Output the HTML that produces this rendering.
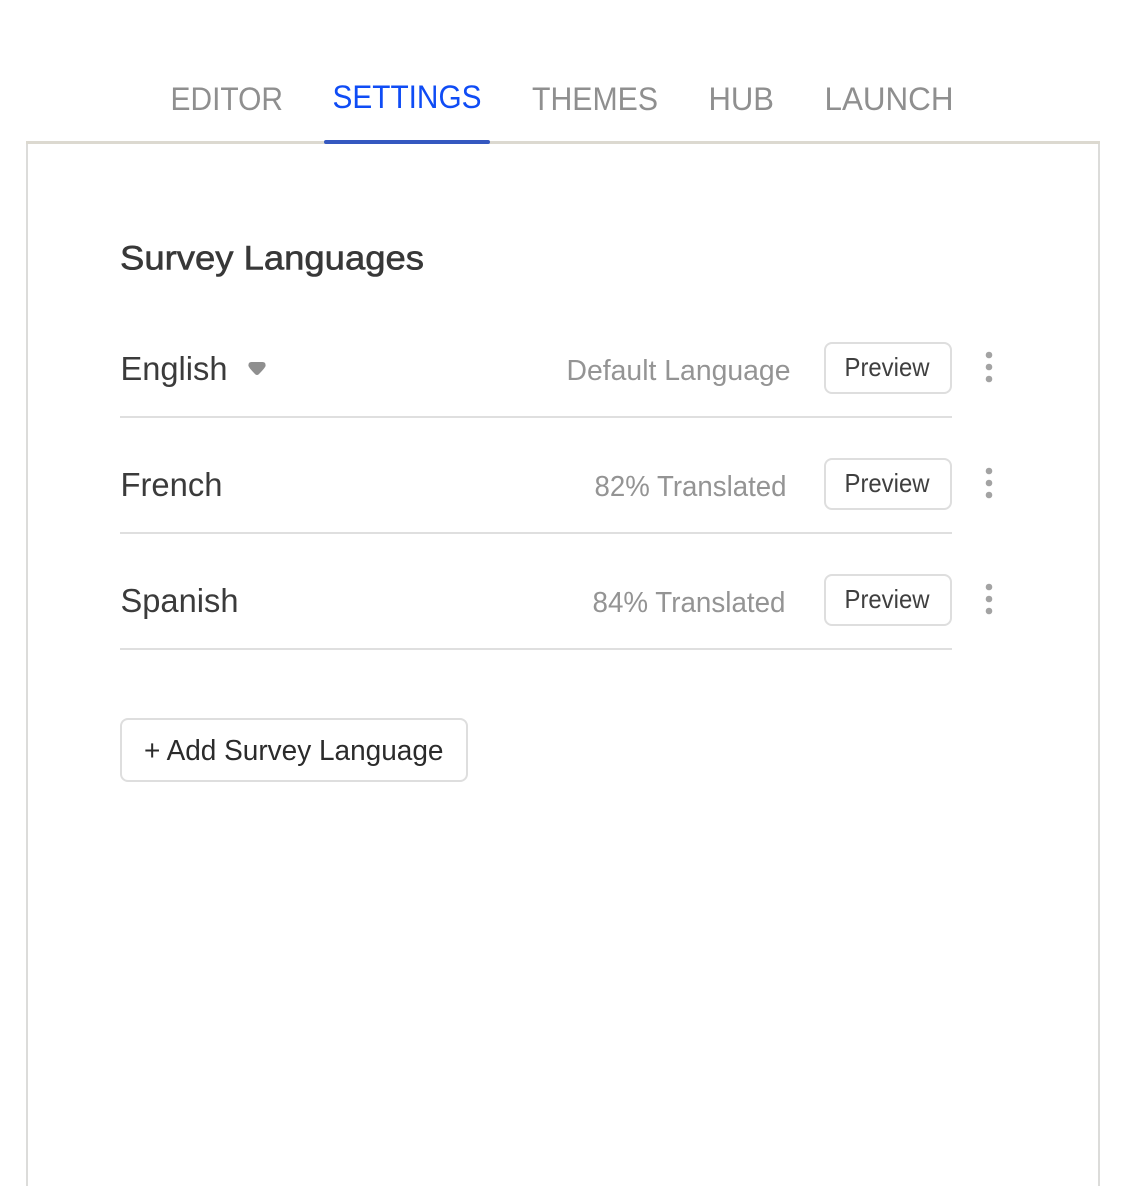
<!DOCTYPE html>
<html>
<head>
<meta charset="utf-8">
<style>
html,body{margin:0;padding:0;background:#fff;width:1126px;height:1186px;overflow:hidden}
svg{display:block}
text{font-family:"Liberation Sans",sans-serif}
.tab{font-size:32.500px;fill:#8f8f8f}
.lang{font-size:33px;fill:#3b3b3b}
.st{font-size:29px;fill:#949494}
.pv{font-size:26px;fill:#3f3f3f}
</style>
</head>
<body>
<svg width="1126" height="1186" viewBox="0 0 1126 1186" xmlns="http://www.w3.org/2000/svg">
<rect x="26" y="141" width="2" height="1045" fill="#dcdcda"/>
<rect x="1098" y="141" width="2" height="1045" fill="#dcdcda"/>
<rect x="26" y="141" width="1074" height="3" fill="#dcd9d0"/>
<rect x="324" y="140" width="166" height="4" rx="2" fill="#3558c0"/>

<text class="tab" x="170.500" y="110" textLength="112.500" lengthAdjust="spacingAndGlyphs">EDITOR</text>
<text class="tab" x="332.500" y="108" textLength="149" lengthAdjust="spacingAndGlyphs" style="fill:#0f4cf5">SETTINGS</text>
<text class="tab" x="532" y="110" textLength="126" lengthAdjust="spacingAndGlyphs">THEMES</text>
<text class="tab" x="708.500" y="110" textLength="65.500" lengthAdjust="spacingAndGlyphs">HUB</text>
<text class="tab" x="824.500" y="110" textLength="129" lengthAdjust="spacingAndGlyphs">LAUNCH</text>

<text x="120" y="269.500" font-size="34" fill="#383838" stroke="#383838" stroke-width=".6" textLength="304" lengthAdjust="spacingAndGlyphs">Survey Languages</text>

<text class="lang" x="120.500" y="380" textLength="107" lengthAdjust="spacingAndGlyphs">English</text>
<path d="M251.500 362H262.500Q266 362 265.500 366Q265 368 258.500 374.500Q257 375.500 255.500 374.500Q249 368 248.500 366Q248 362 251.500 362Z" fill="#8f8f8f"/>
<text class="st" x="566.500" y="380" textLength="224" lengthAdjust="spacingAndGlyphs">Default Language</text>
<rect x="825" y="343" width="126" height="50" rx="7" fill="#fff" stroke="#dedede" stroke-width="2"/>
<text class="pv" x="844.500" y="376" textLength="85" lengthAdjust="spacingAndGlyphs">Preview</text>
<circle cx="989" cy="355" r="3.300" fill="#a3a3a3"/>
<circle cx="989" cy="367" r="3.300" fill="#a3a3a3"/>
<circle cx="989" cy="379" r="3.300" fill="#a3a3a3"/>
<rect x="120" y="416" width="832" height="2" fill="#dfdfdf"/>

<text class="lang" x="120.500" y="496" textLength="102" lengthAdjust="spacingAndGlyphs">French</text>
<text class="st" x="594.500" y="496" textLength="192" lengthAdjust="spacingAndGlyphs">82% Translated</text>
<rect x="825" y="459" width="126" height="50" rx="7" fill="#fff" stroke="#dedede" stroke-width="2"/>
<text class="pv" x="844.500" y="492" textLength="85" lengthAdjust="spacingAndGlyphs">Preview</text>
<circle cx="989" cy="471" r="3.300" fill="#a3a3a3"/>
<circle cx="989" cy="483" r="3.300" fill="#a3a3a3"/>
<circle cx="989" cy="495" r="3.300" fill="#a3a3a3"/>
<rect x="120" y="532" width="832" height="2" fill="#dfdfdf"/>

<text class="lang" x="120.500" y="612" textLength="118" lengthAdjust="spacingAndGlyphs">Spanish</text>
<text class="st" x="592.500" y="612" textLength="193" lengthAdjust="spacingAndGlyphs">84% Translated</text>
<rect x="825" y="575" width="126" height="50" rx="7" fill="#fff" stroke="#dedede" stroke-width="2"/>
<text class="pv" x="844.500" y="608" textLength="85" lengthAdjust="spacingAndGlyphs">Preview</text>
<circle cx="989" cy="587" r="3.300" fill="#a3a3a3"/>
<circle cx="989" cy="599" r="3.300" fill="#a3a3a3"/>
<circle cx="989" cy="611" r="3.300" fill="#a3a3a3"/>
<rect x="120" y="648" width="832" height="2" fill="#dfdfdf"/>

<rect x="121" y="719" width="346" height="62" rx="7" fill="#fff" stroke="#dedede" stroke-width="2"/>
<text x="144" y="760" font-size="29" fill="#2b2b2b" textLength="299.500" lengthAdjust="spacingAndGlyphs">+ Add Survey Language</text>
</svg>
</body>
</html>
